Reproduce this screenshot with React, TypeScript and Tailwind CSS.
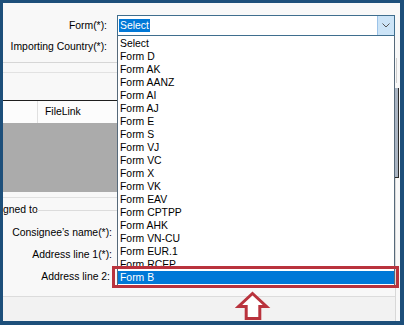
import React from "react";

const items = [
  "Select",
  "Form D",
  "Form AK",
  "Form AANZ",
  "Form AI",
  "Form AJ",
  "Form E",
  "Form S",
  "Form VJ",
  "Form VC",
  "Form X",
  "Form VK",
  "Form EAV",
  "Form CPTPP",
  "Form AHK",
  "Form VN-CU",
  "Form EUR.1",
  "Form RCEP",
  "Form B",
];

export default function App() {
  return (
    <div className="w-[404px] h-[325px] bg-[#1d4f7a] pt-[3px] pl-[3px] pr-[4px] pb-[4px] font-['Liberation_Sans',Arial,sans-serif] text-[10.4px] text-black">
      <div className="relative h-full w-full bg-[#f8f8f8] flex overflow-hidden">
        {/* left content */}
        <div className="w-[392px] flex flex-col">
          <div className="h-[60px] border-b border-[#d6d6d6] pt-[12px] flex flex-col">
            <div className="flex items-center h-[21px]">
              <div className="w-[104px] text-right whitespace-nowrap">Form(*):</div>
              <div className="ml-[10px] w-[278px] h-[21px] border border-[#3f6e8e] bg-white flex items-center">
                <span className="ml-[1px] px-[1px] h-[13px] leading-[13px] bg-[#0078d7] text-white">Select</span>
                <div className="flex-1" />
                <div className="w-[17px] h-full bg-[#cce4f7] border-l border-[#9cc3e8] flex items-center justify-center">
                  <svg width="8" height="5" viewBox="0 0 8 5">
                    <path d="M0.5 0.5 L4 4 L7.5 0.5" fill="none" stroke="#555" strokeWidth="1" />
                  </svg>
                </div>
              </div>
            </div>
            <div className="flex items-center h-[22px]">
              <div className="w-[104px] text-right whitespace-nowrap">Importing Country(*):</div>
            </div>
          </div>
          <div className="h-[10px] border-b border-[#e2e2e2]" />
          <div className="h-[28px] border-b border-[#1e1e1e]" />
          <div className="h-[22px] bg-[#fcfcfc] flex">
            <div className="w-[35px] h-full border-r border-[#e0e0e0]" />
            <div className="pl-[7px] flex items-center">FileLink</div>
          </div>
          <div className="h-[69px] bg-[#ababab]" />
          <div className="h-[6px] border-b border-[#e0e0e0]" />
          <div className="h-[24px] flex items-center">
            <div className="w-[31px] whitespace-nowrap">gned to</div>
            <div className="ml-[3px] flex-1 h-px bg-[#dcdcdc]" />
          </div>
          <div className="h-[22px] flex items-center">
            <div className="w-[109px] text-right whitespace-nowrap">Consignee’s name(*):</div>
          </div>
          <div className="h-[21px] flex items-center">
            <div className="w-[109px] text-right whitespace-nowrap">Address line 1(*):</div>
          </div>
          <div className="h-[23px] flex items-center">
            <div className="w-[107px] text-right whitespace-nowrap">Address line 2:</div>
          </div>
          <div className="h-[9px] border-b border-[#dcdcdc]" />
          <div className="flex-1 bg-[#f2f2f2]" />
        </div>

        {/* right strip */}
        <div className="w-[5px] flex flex-col">
          <div className="h-[55px]" />
          <div className="h-[25px] ml-[1px] border-l border-[#d0d0d0]" />
          <div className="h-[5px]" />
          <div className="h-[90px] w-[4px] bg-[#a9b4c2] border-r border-b border-[#2a2a2a]" />
          <div className="flex-1 border-l border-[#d8d8d8]" />
        </div>

        {/* dropdown list */}
        <div className="absolute left-[114px] top-[33px] w-[278px] h-[250px] bg-white border-x border-b border-[#56697a] pt-[1px]">
          {items.map((it, i) => (
            <div
              key={it}
              className={
                i === items.length - 1
                  ? "h-[13px] leading-[13px] pl-[2px] whitespace-nowrap bg-[#0078d7] text-white"
                  : "h-[13px] leading-[13px] pl-[2px] whitespace-nowrap"
              }
            >
              {it}
            </div>
          ))}
        </div>

        {/* red highlight box */}
        <div className="absolute left-[109px] top-[263px] w-[287px] h-[22px] border-[3px] border-[#b9333d]" />

        {/* red arrow */}
        <svg className="absolute left-[232px] top-[286px]" width="36" height="33" viewBox="0 0 36 33">
          <path
            d="M17.5 4.5 L31.5 17.5 L24.8 17.5 L24.8 29.5 L11.2 29.5 L11.2 17.5 L3.5 17.5 Z"
            fill="white"
            stroke="#b9333d"
            strokeWidth="3"
            strokeLinejoin="miter"
          />
        </svg>
      </div>
    </div>
  );
}
